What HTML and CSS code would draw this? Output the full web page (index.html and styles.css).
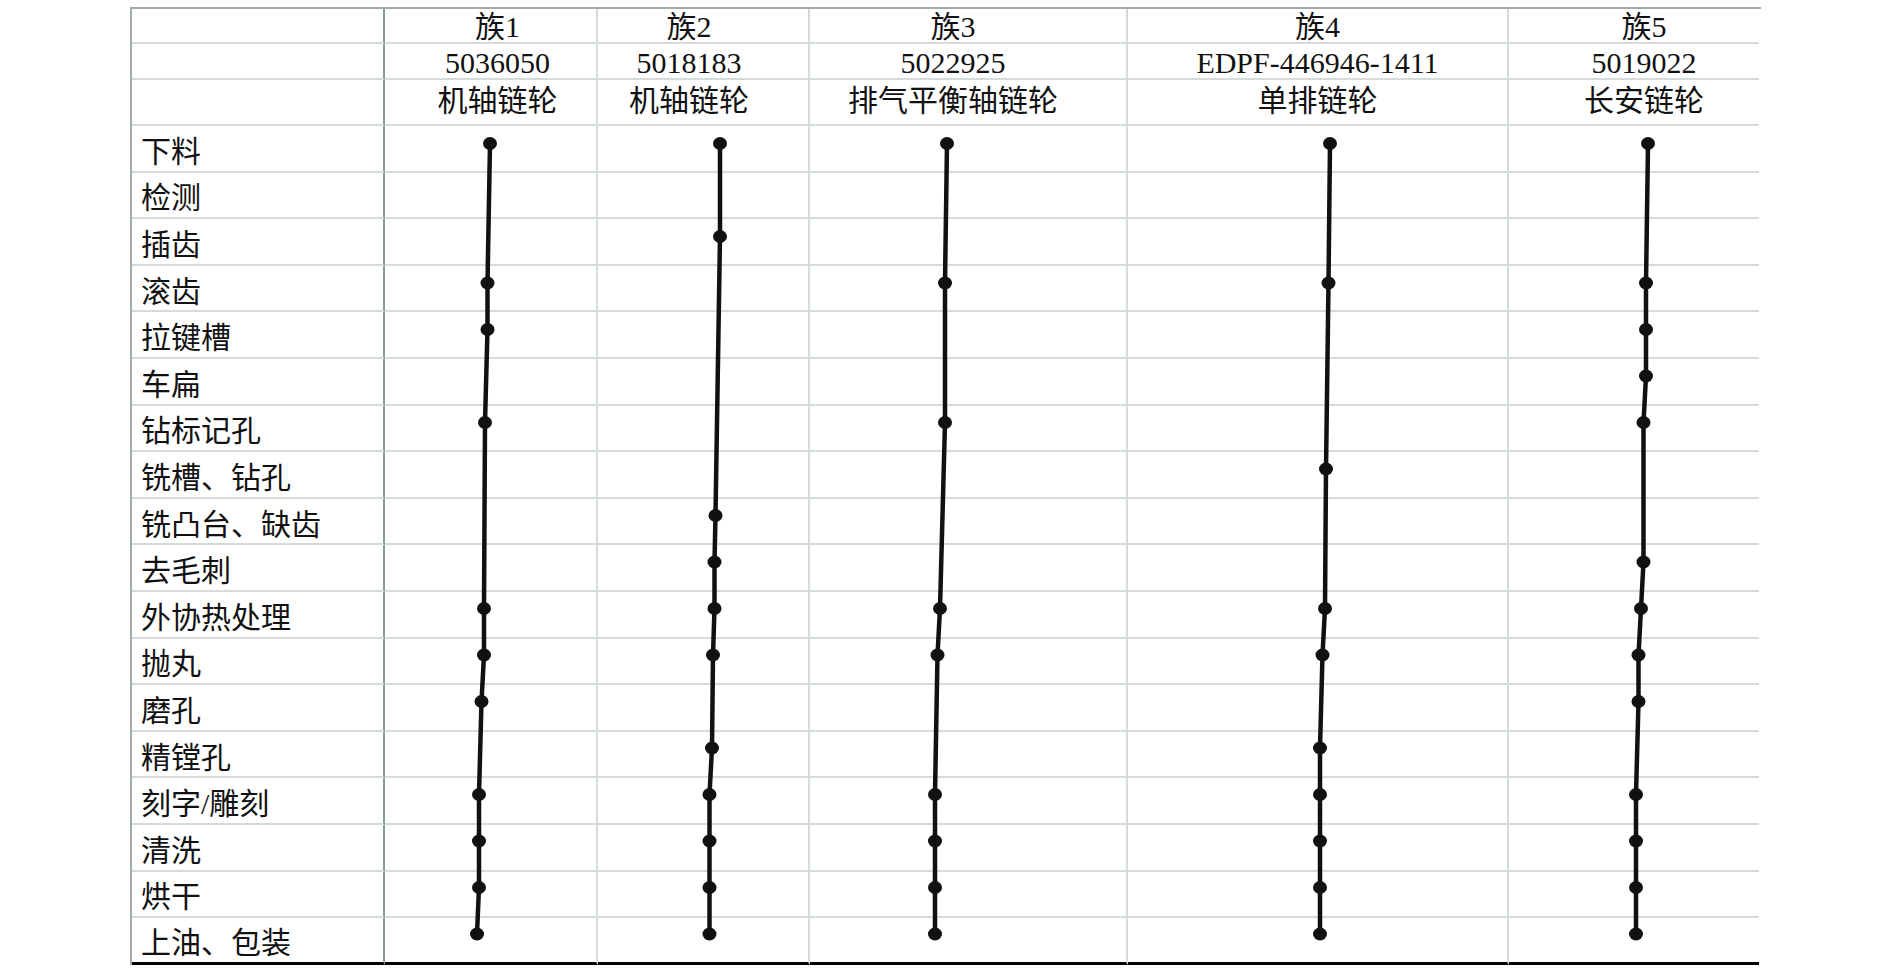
FILE: index.html
```html
<!DOCTYPE html>
<html lang="zh-CN">
<head>
    <meta charset="UTF-8">
    <title>零件族工艺路线</title>
    <link rel="stylesheet" href="styles.css">
</head>
<body>
    <div class="sheet">
        <!-- header: family / part number / part name -->
        <div class="row head r1">
            <div></div>
            <div class="c1">族1</div>
            <div class="c2">族2</div>
            <div class="c3">族3</div>
            <div class="c4">族4</div>
            <div class="c5">族5</div>
        </div>
        <div class="row head r2">
            <div></div>
            <div class="c1">5036050</div>
            <div class="c2">5018183</div>
            <div class="c3">5022925</div>
            <div class="c4">EDPF-446946-1411</div>
            <div class="c5">5019022</div>
        </div>
        <div class="row head r3">
            <div></div>
            <div class="c1">机轴链轮</div>
            <div class="c2">机轴链轮</div>
            <div class="c3">排气平衡轴链轮</div>
            <div class="c4">单排链轮</div>
            <div class="c5">长安链轮</div>
        </div>

        <!-- process steps -->
        <div class="row step"><div>下料</div><div></div><div></div><div></div><div></div><div></div></div>
        <div class="row step"><div>检测</div><div></div><div></div><div></div><div></div><div></div></div>
        <div class="row step"><div>插齿</div><div></div><div></div><div></div><div></div><div></div></div>
        <div class="row step"><div>滚齿</div><div></div><div></div><div></div><div></div><div></div></div>
        <div class="row step"><div>拉键槽</div><div></div><div></div><div></div><div></div><div></div></div>
        <div class="row step"><div>车扁</div><div></div><div></div><div></div><div></div><div></div></div>
        <div class="row step"><div>钻标记孔</div><div></div><div></div><div></div><div></div><div></div></div>
        <div class="row step"><div>铣槽、钻孔</div><div></div><div></div><div></div><div></div><div></div></div>
        <div class="row step"><div>铣凸台、缺齿</div><div></div><div></div><div></div><div></div><div></div></div>
        <div class="row step"><div>去毛刺</div><div></div><div></div><div></div><div></div><div></div></div>
        <div class="row step"><div>外协热处理</div><div></div><div></div><div></div><div></div><div></div></div>
        <div class="row step"><div>抛丸</div><div></div><div></div><div></div><div></div><div></div></div>
        <div class="row step"><div>磨孔</div><div></div><div></div><div></div><div></div><div></div></div>
        <div class="row step"><div>精镗孔</div><div></div><div></div><div></div><div></div><div></div></div>
        <div class="row step"><div>刻字/雕刻</div><div></div><div></div><div></div><div></div><div></div></div>
        <div class="row step"><div>清洗</div><div></div><div></div><div></div><div></div><div></div></div>
        <div class="row step"><div>烘干</div><div></div><div></div><div></div><div></div><div></div></div>
        <div class="row step"><div>上油、包装</div><div></div><div></div><div></div><div></div><div></div></div>
    </div>

    <!-- route lines drawn over the sheet -->
    <svg class="routes" width="1892" height="971" viewBox="0 0 1892 971">
        <defs>
            <marker id="dot" viewBox="-8 -7 16 14" markerWidth="16" markerHeight="14" refX="0" refY="0" markerUnits="userSpaceOnUse">
                <ellipse rx="7" ry="6.5" fill="#111"/>
            </marker>
        </defs>
        <g fill="none" stroke="#111" stroke-width="4.5" marker-start="url(#dot)" marker-mid="url(#dot)" marker-end="url(#dot)">
            <polyline points="490,143.5 487.5,283 487.5,329.5 485,422.5 484,608.5 484,655 481.5,701.5 479,794.5 479,841 479,887.5 477,934"/>
            <polyline points="720,143.5 720,236.5 715.5,515.5 714.5,562 714.5,608.5 713,655 712,748 709.5,794.5 709.5,841 709.5,887.5 709.5,934"/>
            <polyline points="947,143.5 945,283 945,422.5 940,608.5 937.5,655 935,794.5 935,841 935,887.5 935,934"/>
            <polyline points="1330,143.5 1328.5,283 1326,469 1325,608.5 1322.5,655 1320,748 1320,794.5 1320,841 1320,887.5 1320,934"/>
            <polyline points="1648,143.5 1646,283 1646,329.5 1646,376 1643.5,422.5 1643.5,562 1641,608.5 1638.5,655 1638.5,701.5 1636,794.5 1636,841 1636,887.5 1636,934"/>
        </g>
    </svg>
</body>
</html>
```

FILE: styles.css
```css
/* Page */
body {
    margin: 0;
    position: relative;
    background-color: #fff;
    color: #111;
    font-family: "Liberation Serif", "Noto Sans CJK SC", serif;
}

/* Sheet grid */
.sheet {
    width: 1629px;
    margin: 7px 0 0 130px;
    border-top: 2px solid #a1aba7;
    border-left: 2px solid #a1aba7;
}

.row {
    display: grid;
    grid-template-columns: 253px 213px 212px 318px 381px 250px;
}

.row > div {
    box-sizing: border-box;
    display: flex;
    align-items: center;
    border-right: 2px solid #d5dbd8;
    border-bottom: 2px solid #d5dbd8;
    font-size: 30px;
    line-height: 30px;
    white-space: nowrap;
}

.row > div:first-child {
    border-right-color: #889a9a;
}

.row > div:last-child {
    border-right: none;
}

/* Header rows */
.head > div {
    justify-content: center;
}

.r1 {
    height: 35px;
}

.r1 > div {
    padding-top: 2px;
}

.r2 {
    height: 36px;
}

.r2 > div {
    padding-top: 4px;
}

.r3 {
    height: 46px;
}

.r3 > div {
    padding-bottom: 3px;
}

/* header text sits a little off the column centre */
.head .c1 {
    padding-left: 14px;
}

.head .c2 {
    padding-right: 28px;
}

.head .c3 {
    padding-right: 30px;
}

.head .c5 {
    padding-left: 20px;
}

/* Process rows */
.step {
    height: 46.6px;
}

.step > div:first-child {
    padding-left: 9px;
    padding-top: 7px;
}

.step:last-child > div {
    border-bottom: 3px solid #000;
}

/* Route overlay */
.routes {
    position: absolute;
    top: 0;
    left: 0;
    pointer-events: none;
}
```
